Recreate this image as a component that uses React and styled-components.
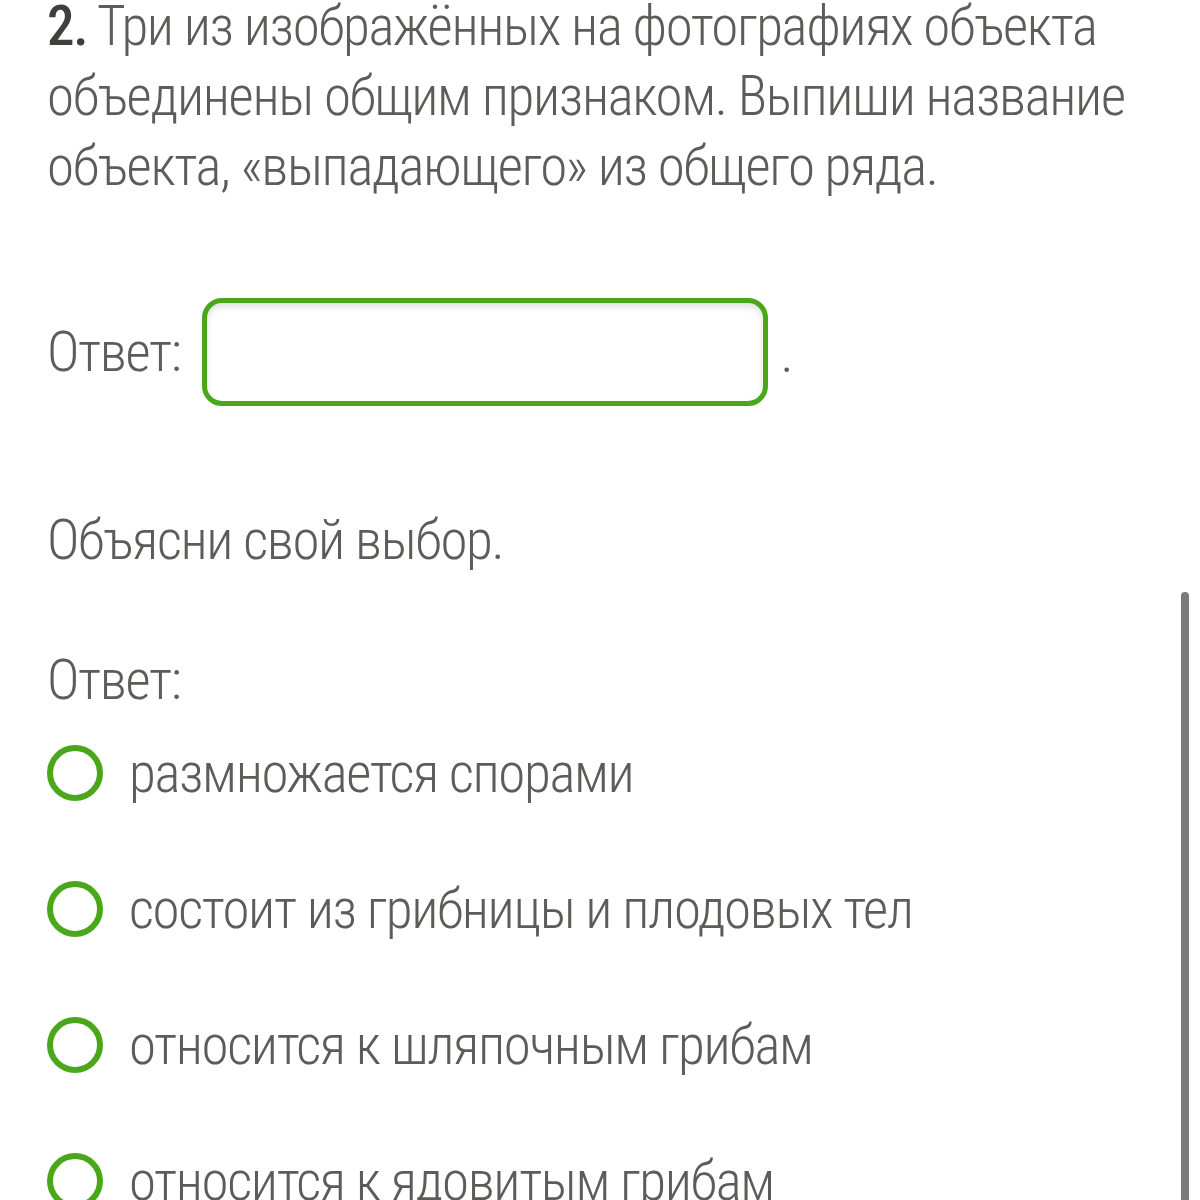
import React from 'react';
import styled, { createGlobalStyle } from 'styled-components';

const GlobalStyle = createGlobalStyle`
  html, body {
    margin: 0;
    padding: 0;
    background: #ffffff;
  }
  body {
    font-family: "Roboto Condensed", Roboto, "Liberation Sans Narrow", sans-serif;
    color: #5c5d58;
    letter-spacing: -1.35px;
  }
`;

const Page = styled.div`
  width: 1200px;
  height: 1200px;
  overflow: hidden;
  position: relative;
  box-sizing: border-box;
  padding: 0 0 0 47px;
`;

const Question = styled.p`
  margin: -9px 0 0;
  font-size: 55px;
  font-weight: 300;
  line-height: 70px;
  white-space: nowrap;
`;

const Num = styled.b`
  font-weight: 500;
  color: #3f403b;
`;

const AnswerRow = styled.div`
  display: flex;
  align-items: center;
  margin-top: 96px;
  height: 110px;
`;

const Label = styled.span`
  font-size: 55px;
  font-weight: 300;
  line-height: 70px;
`;

const Field = styled.div`
  width: 566px;
  height: 108px;
  box-sizing: border-box;
  margin-left: 22px;
  border: 5px solid #4aa71a;
  border-radius: 20px;
  box-shadow: inset 0 4px 6px rgba(0, 0, 0, 0.12);
  background: #fff;
`;

const Dot = styled.span`
  font-size: 55px;
  font-weight: 300;
  margin-left: 12px;
  align-self: flex-end;
  margin-bottom: 22px;
`;

const Line = styled.p`
  margin: ${p => p.$top}px 0 0;
  font-size: 55px;
  font-weight: 300;
  line-height: 70px;
`;

const Options = styled.div`
  display: flex;
  flex-direction: column;
  gap: 66px;
  margin-top: 23px;
`;

const Option = styled.label`
  display: flex;
  align-items: center;
  gap: 26px;
  height: 70px;
  font-size: 55px;
  font-weight: 300;
`;

const Radio = styled.span`
  width: 56px;
  height: 56px;
  box-sizing: border-box;
  border: 6px solid #4aa71a;
  border-radius: 50%;
  flex: none;
`;

const Scrollbar = styled.div`
  position: absolute;
  right: 11px;
  top: 592px;
  bottom: 0;
  width: 8px;
  border-radius: 4px 4px 0 0;
  background: #7b7b7b;
`;

const options = [
  'размножается спорами',
  'состоит из грибницы и плодовых тел',
  'относится к шляпочным грибам',
  'относится к ядовитым грибам',
];

export default function App() {
  return (
    <Page>
      <GlobalStyle />
      <Question>
        <Num>2.</Num> Три из изображённых на фотографиях объекта<br />
        объединены общим признаком. Выпиши название<br />
        объекта, «выпадающего» из общего ряда.
      </Question>
      <AnswerRow>
        <Label>Ответ:</Label>
        <Field />
        <Dot>.</Dot>
      </AnswerRow>
      <Line $top={98}>Объясни свой выбор.</Line>
      <Line $top={70}>Ответ:</Line>
      <Options>
        {options.map(o => (
          <Option key={o}>
            <Radio />
            {o}
          </Option>
        ))}
      </Options>
      <Scrollbar />
    </Page>
  );
}
